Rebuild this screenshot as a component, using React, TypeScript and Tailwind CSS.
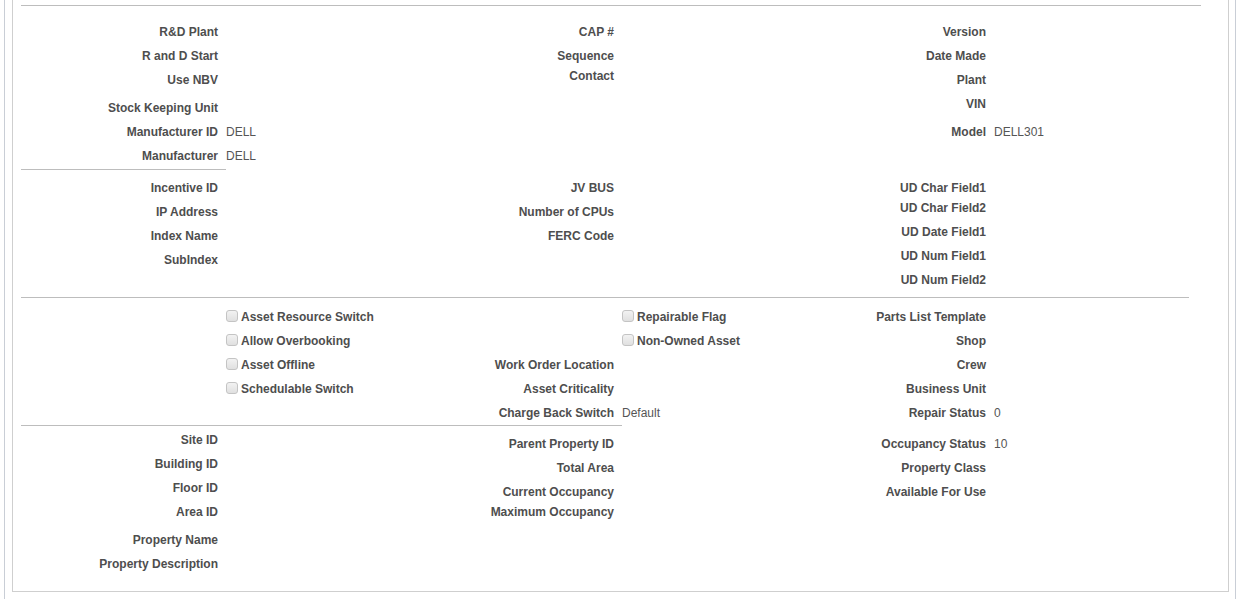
import React from "react";

type R = { l?: string; v?: string; cb?: string; h?: number; mt?: number };

function Row({ r }: { r: R }) {
  const h = r.h ?? 24;
  return (
    <div className="flex items-center pt-[2px]" style={{ height: h, marginTop: r.mt ?? 0 }}>
      <div className="w-[197px] shrink-0 text-right font-bold text-[#4e4e4e] whitespace-nowrap">{r.l ?? ""}</div>
      <div className="ml-[8px] flex items-center whitespace-nowrap">
        {r.cb ? (
          <>
            <span className="inline-block w-[12px] h-[12px] rounded-[3px] border border-[#c4c4c4] bg-gradient-to-b from-[#f2f2f2] to-[#e0e0e0] mt-[-3px]" />
            <span className="ml-[3px] font-bold text-[#4e4e4e]">{r.cb}</span>
          </>
        ) : (
          <span className="text-[#555]">{r.v ?? ""}</span>
        )}
      </div>
    </div>
  );
}

function Col({ rows, w, pt }: { rows: R[]; w?: string; pt?: number }) {
  return (
    <div className={w ?? "flex-1"} style={{ paddingTop: pt ?? 0 }}>
      {rows.map((r, i) => (
        <Row key={i} r={r} />
      ))}
    </div>
  );
}

function Section({ cols, pt, pt2 }: { cols: R[][]; pt: number; pt2?: number }) {
  return (
    <div className="flex" style={{ paddingTop: pt }}>
      <Col rows={cols[0]} w="w-[396px] shrink-0" />
      <Col rows={cols[1]} w="w-[372px] shrink-0" pt={pt2} />
      <Col rows={cols[2]} pt={pt2} />
    </div>
  );
}

export default function App() {
  const s1: R[][] = [
    [
      { l: "R&D Plant" },
      { l: "R and D Start" },
      { l: "Use NBV" },
      { l: "Stock Keeping Unit", mt: 4 },
      { l: "Manufacturer ID", v: "DELL" },
      { l: "Manufacturer", v: "DELL" },
    ],
    [{ l: "CAP #" }, { l: "Sequence" }, { l: "Contact", h: 16 }],
    [
      { l: "Version" },
      { l: "Date Made" },
      { l: "Plant" },
      { l: "VIN" },
      { l: "Model", v: "DELL301", mt: 4 },
    ],
  ];
  const s2: R[][] = [
    [{ l: "Incentive ID" }, { l: "IP Address" }, { l: "Index Name" }, { l: "SubIndex" }],
    [{ l: "JV BUS" }, { l: "Number of CPUs" }, { l: "FERC Code" }],
    [
      { l: "UD Char Field1" },
      { l: "UD Char Field2", h: 16 },
      { l: "UD Date Field1", mt: 4 },
      { l: "UD Num Field1" },
      { l: "UD Num Field2" },
    ],
  ];
  const s3: R[][] = [
    [
      { cb: "Asset Resource Switch" },
      { cb: "Allow Overbooking" },
      { cb: "Asset Offline" },
      { cb: "Schedulable Switch" },
    ],
    [
      { cb: "Repairable Flag" },
      { cb: "Non-Owned Asset" },
      { l: "Work Order Location" },
      { l: "Asset Criticality" },
      { l: "Charge Back Switch", v: "Default" },
    ],
    [
      { l: "Parts List Template" },
      { l: "Shop" },
      { l: "Crew" },
      { l: "Business Unit" },
      { l: "Repair Status", v: "0" },
    ],
  ];
  const s4: R[][] = [
    [
      { l: "Site ID" },
      { l: "Building ID" },
      { l: "Floor ID" },
      { l: "Area ID" },
      { l: "Property Name", mt: 4 },
      { l: "Property Description" },
    ],
    [
      { l: "Parent Property ID" },
      { l: "Total Area" },
      { l: "Current Occupancy" },
      { l: "Maximum Occupancy", h: 16 },
    ],
    [{ l: "Occupancy Status", v: "10" }, { l: "Property Class" }, { l: "Available For Use" }],
  ];

  return (
    <div
      className="w-[1241px] h-[599px] overflow-hidden bg-white text-[12px] leading-[14px]"
      style={{ fontFamily: '"Liberation Sans", Arial, sans-serif' }}
    >
      <div className="ml-[4px] w-[1232px] h-[599px] border-l border-r border-[#c9ced6] pl-[7px] pr-[6px]">
        <div className="border-l border-r border-b border-[#cfcfcf] h-[592px] px-[8px] pt-[5px]">
          <div className="w-[1180px] h-px bg-[#bdbdbd]" />
          <Section cols={s1} pt={13} />
          <div className="mt-[2px] w-[205px] h-px bg-[#bdbdbd]" />
          <Section cols={s2} pt={5} />
          <div className="mt-[6px] w-[1168px] h-px bg-[#bdbdbd]" />
          <Section cols={s3} pt={6} />
          <div className="mt-[1px] w-[601px] h-px bg-[#bdbdbd]" />
          <Section cols={s4} pt={1} pt2={4} />
        </div>
      </div>
    </div>
  );
}
